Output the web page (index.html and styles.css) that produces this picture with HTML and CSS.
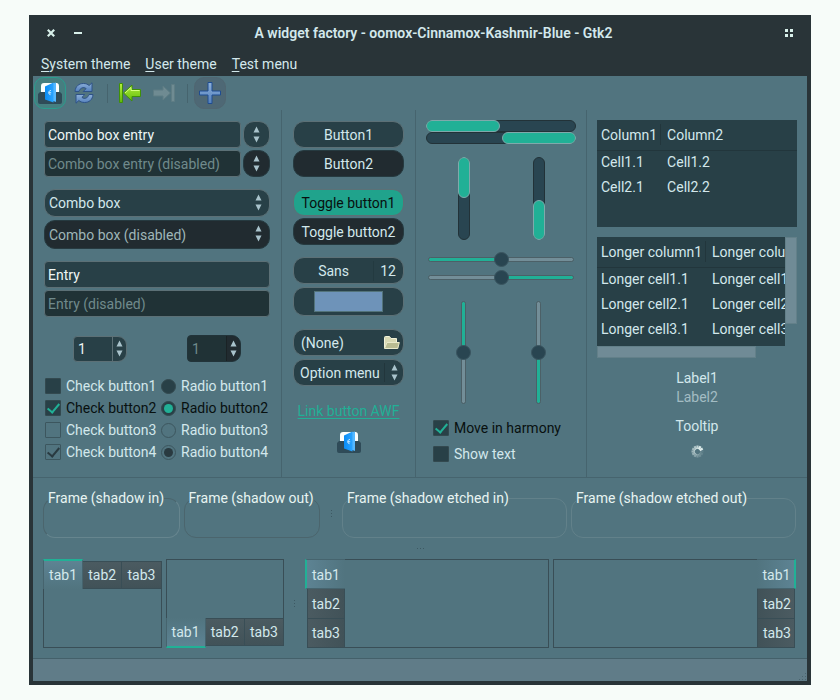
FILE: index.html
```html
<!DOCTYPE html>
<html lang="en">
<head>
<meta charset="utf-8">
<title>A widget factory</title>
<link rel="stylesheet" href="styles.css">
</head>
<body>
<svg width="0" height="0" class="defs" aria-hidden="true">
  <defs>
    <linearGradient id="blue" x1="0" y1="0" x2="0" y2="1"><stop offset="0" stop-color="#8db0d8"/><stop offset="1" stop-color="#5380bd"/></linearGradient>
    <linearGradient id="green" x1="0" y1="0" x2="0" y2="1"><stop offset="0" stop-color="#b4f03c"/><stop offset="1" stop-color="#5fb80a"/></linearGradient>
    <linearGradient id="door" x1="0" y1="0" x2="1" y2="0"><stop offset="0" stop-color="#0a8cf5"/><stop offset="1" stop-color="#2aa4ff"/></linearGradient>
    <symbol id="updown" viewBox="0 0 7 17">
      <path d="M3.500 0.500 6.500 6.500H.5Z" fill="#a9c3cc"/><path d="M3.500 16.500 6.500 10.500H.5Z" fill="#a9c3cc"/>
    </symbol>
    <symbol id="app" viewBox="0 0 24 22">
      <path d="M3 12V4a3 3 0 0 1 3-3h13a3 3 0 0 1 2 3v8Z" fill="#fbfdfc"/>
      <path d="M2 10h20l2 2v8a2 2 0 0 1-2 2H2a2 2 0 0 1-2-2v-8Z" fill="#2f4b58"/>
      <path d="M14 1.500 18 .5V20l-4-1.500Z" fill="#55b8ff"/>
      <path d="M7 4.500 15.500.5v20L7 17.500Z" fill="url(#door)"/>
      <path d="M12.800 8.500c-2.300-.3-2.800 4.200-.3 4.200M10.800 10.800h2.400" fill="none" stroke="#dff2ff"/>
    </symbol>
  </defs>
</svg>
<div class="window">
  <header class="titlebar">
    <div class="win-buttons">
      <button aria-label="Close"><svg width="8" height="8" viewBox="0 0 8 8"><path d="M.8.8l6.400 6.400M7.200.8.8 7.200" stroke="#d8f0ea" stroke-width="2.200"/></svg></button>
      <button aria-label="Minimize"><svg width="8" height="8" viewBox="0 0 8 8"><path d="M0 4h8" stroke="#d8f0ea" stroke-width="2"/></svg></button>
    </div>
    <h1>A widget factory - oomox-Cinnamox-Kashmir-Blue - Gtk2</h1>
    <div class="win-buttons">
      <button aria-label="Menu"><svg width="8" height="8" viewBox="0 0 8 8"><path d="M0 0h3v3H0zM5 0h3v3H5zM0 5h3v3H0zM5 5h3v3H5z" fill="#d8f0ea"/></svg></button>
    </div>
  </header>
  <nav class="menubar">
    <button><u>S</u>ystem theme</button>
    <button><u>U</u>ser theme</button>
    <button><u>T</u>est menu</button>
  </nav>
  <div class="surface">
    <div class="toolbar">
      <button class="tool active" aria-label="Application"><svg width="24" height="22"><use href="#app"/></svg></button>
      <button class="tool" aria-label="Refresh"><svg width="22" height="22" viewBox="0 0 22 22">
        <path d="M2 9.500C2.500 4 6 1.500 10.500 1.500c2.500 0 4.300.8 5.600 2L19 .8V9.500H10.200l2.900-2.900C10.500 4.500 7 6 6 9.500Z" fill="url(#blue)" stroke="#2e5287" stroke-linejoin="round"/>
        <path d="M20 12.500C19.500 18 16 20.500 11.500 20.500c-2.500 0-4.300-.8-5.600-2L3 21.200V12.500h8.800l-2.900 2.900c2.600 2.100 6.100.6 7.100-2.900Z" fill="url(#blue)" stroke="#2e5287" stroke-linejoin="round"/>
      </svg></button>
      <span class="sep"></span>
      <button class="tool" aria-label="Previous"><svg width="24" height="22" viewBox="0 0 24 22">
        <path d="M1.500 1.500h3v19h-3zM5.500 11 14 3v4.500h8.500v7H14V19Z" fill="url(#green)" stroke="#3f9008" stroke-linejoin="round"/>
        <path d="M7 11l6-5.500v3h8.500" fill="none" stroke="#d5ff80"/>
      </svg></button>
      <button class="tool" disabled aria-label="Next"><svg width="24" height="22" viewBox="0 0 24 22">
        <path d="M22.500 2.500h-3v17h3zM18.500 11 11 4v4H1.500v6H11v4Z" fill="#6f8b92" stroke="#5f7d84" stroke-linejoin="round"/>
      </svg></button>
      <span class="sep"></span>
      <button class="tool raised" aria-label="Add"><svg width="24" height="24" viewBox="0 0 24 24">
        <path d="M10 1.500h4V10h8.500v4H14v8.500h-4V14H1.500v-4H10Z" fill="url(#blue)" stroke="#1f4c91" stroke-linejoin="round"/>
      </svg></button>
    </div>

    <main class="columns">
      <section class="col inputs">
        <div class="group">
          <div class="combo-entry"><input class="entry" type="text" value="Combo box entry" aria-label="Combo box entry"><button class="btn" aria-label="Open list"><svg width="7" height="17"><use href="#updown"/></svg></button></div>
          <div class="combo-entry off"><input class="entry" type="text" value="Combo box entry (disabled)" aria-label="Disabled combo box entry" disabled><button class="btn" disabled aria-label="Open list"><svg width="7" height="17"><use href="#updown"/></svg></button></div>
        </div>
        <div class="group combos">
          <div class="pick"><select aria-label="Combo box"><option>Combo box</option></select><svg width="7" height="17"><use href="#updown"/></svg></div>
          <div class="pick off"><select aria-label="Combo box (disabled)" disabled><option>Combo box (disabled)</option></select><svg width="7" height="17"><use href="#updown"/></svg></div>
        </div>
        <div class="group">
          <input class="entry" type="text" value="Entry" aria-label="Entry">
          <input class="entry" type="text" value="Entry (disabled)" aria-label="Disabled entry" disabled>
        </div>
        <div class="spins">
          <div class="spin"><input type="number" value="1" aria-label="Number"><button aria-label="Step"><svg width="7" height="17"><use href="#updown"/></svg></button></div>
          <div class="spin off"><input type="number" value="1" aria-label="Disabled number" disabled><button disabled aria-label="Step"><svg width="7" height="17"><use href="#updown"/></svg></button></div>
        </div>
        <div class="toggles">
          <label><input type="checkbox">Check button1</label>
          <label><input type="radio" name="r1">Radio button1</label>
          <label class="hot"><input type="checkbox" checked>Check button2</label>
          <label class="hot"><input type="radio" name="r1" checked>Radio button2</label>
          <label><input type="checkbox" disabled>Check button3</label>
          <label><input type="radio" name="r2" disabled>Radio button3</label>
          <label><input type="checkbox" checked disabled>Check button4</label>
          <label><input type="radio" name="r2" checked disabled>Radio button4</label>
        </div>
      </section>

      <section class="col buttons">
        <div class="group">
          <button class="btn">Button1</button>
          <button class="btn" disabled>Button2</button>
        </div>
        <div class="group">
          <button class="btn pressed" aria-pressed="true">Toggle button1</button>
          <button class="btn" disabled>Toggle button2</button>
        </div>
        <div class="group wide">
          <button class="btn split"><span>Sans</span><span>12</span></button>
          <input class="btn color" type="color" value="#6e93b9" aria-label="Color">
        </div>
        <div class="group wide">
          <button class="btn file"><span>(None)</span><svg width="17" height="15" viewBox="0 0 17 15">
            <path d="M1.500 13V2.500a1 1 0 0 1 1-1h4l1.500 2h5.500V8" fill="#d8d9b4" stroke="#f1f2d8"/>
            <path d="M1.500 13.500 4 7.500h12.300l-1.500 6Z" fill="#b9bc92" stroke="#e9eacb" stroke-linejoin="round"/>
          </svg></button>
          <div class="pick menu"><select aria-label="Option menu"><option>Option menu</option></select><svg width="7" height="17"><use href="#updown"/></svg></div>
        </div>
        <a class="link" href="#awf">Link button AWF</a>
        <svg class="app-icon" width="24" height="22"><use href="#app"/></svg>
      </section>

      <section class="col ranges">
        <div class="bars">
          <div class="bar" role="progressbar" aria-label="Progress" aria-valuenow="50"><i></i></div>
          <div class="bar end" role="progressbar" aria-label="Reverse progress" aria-valuenow="50"><i></i></div>
        </div>
        <div class="pair">
          <div class="bar tall" role="progressbar" aria-label="Downward progress" aria-valuenow="50"><i></i></div>
          <div class="bar tall end" role="progressbar" aria-label="Upward progress" aria-valuenow="50"><i></i></div>
        </div>
        <div class="scales">
          <input class="scale" type="range" value="50" aria-label="Scale">
          <input class="scale rev" type="range" value="50" aria-label="Reverse scale">
        </div>
        <div class="pair">
          <input class="scale vert" type="range" value="50" aria-label="Vertical scale">
          <input class="scale vert rev" type="range" value="50" aria-label="Reverse vertical scale">
        </div>
        <div class="options">
          <label class="hot"><input type="checkbox" checked>Move in harmony</label>
          <label><input type="checkbox">Show text</label>
        </div>
      </section>

      <section class="col views">
        <div class="tree first">
          <table>
            <thead><tr><th>Column1</th><th>Column2</th></tr></thead>
            <tbody><tr><td>Cell1.1</td><td>Cell1.2</td></tr><tr><td>Cell2.1</td><td>Cell2.2</td></tr></tbody>
          </table>
        </div>
        <div class="scroller">
          <div class="tree">
            <table>
              <thead><tr><th>Longer column1</th><th>Longer column2</th></tr></thead>
              <tbody>
                <tr><td>Longer cell1.1</td><td>Longer cell1.2</td></tr>
                <tr><td>Longer cell2.1</td><td>Longer cell2.2</td></tr>
                <tr><td>Longer cell3.1</td><td>Longer cell3.2</td></tr>
              </tbody>
            </table>
          </div>
          <div class="vbar"></div>
          <div class="hbar"></div>
        </div>
        <div class="labels">
          <p>Label1</p>
          <p class="dim">Label2</p>
          <p class="tip">Tooltip</p>
          <svg width="13" height="13" viewBox="-6.500 -6.500 13 13" stroke="#dcebea" stroke-width="2.200">
            <path d="M0-2.500v-3.500" opacity=".8"/><path d="M0-2.500v-3.500" transform="rotate(30)"/><path d="M0-2.500v-3.500" transform="rotate(60)"/>
            <path d="M0-2.500v-3.500" opacity=".1" transform="rotate(90)"/><path d="M0-2.500v-3.500" opacity=".15" transform="rotate(120)"/><path d="M0-2.500v-3.500" opacity=".22" transform="rotate(150)"/>
            <path d="M0-2.500v-3.500" opacity=".3" transform="rotate(180)"/><path d="M0-2.500v-3.500" opacity=".4" transform="rotate(210)"/><path d="M0-2.500v-3.500" opacity=".5" transform="rotate(240)"/>
            <path d="M0-2.500v-3.500" opacity=".55" transform="rotate(270)"/><path d="M0-2.500v-3.500" opacity=".6" transform="rotate(300)"/><path d="M0-2.500v-3.500" opacity=".7" transform="rotate(330)"/>
          </svg>
        </div>
      </section>
    </main>

    <div class="frames">
      <div class="pane">
        <fieldset class="in"><legend>Frame (shadow in)</legend></fieldset>
        <fieldset><legend>Frame (shadow out)</legend></fieldset>
      </div>
      <span class="grip"></span>
      <div class="pane">
        <fieldset class="etched"><legend>Frame (shadow etched in)</legend></fieldset>
        <fieldset class="etched"><legend>Frame (shadow etched out)</legend></fieldset>
      </div>
    </div>
    <div class="grip flat"></div>
    <div class="notebooks">
      <div class="pane">
        <div class="book top"><div class="tabs" role="tablist"><button role="tab" aria-selected="true">tab1</button><button role="tab">tab2</button><button role="tab">tab3</button></div><div class="page"></div></div>
        <div class="book bottom"><div class="tabs" role="tablist"><button role="tab" aria-selected="true">tab1</button><button role="tab">tab2</button><button role="tab">tab3</button></div><div class="page"></div></div>
      </div>
      <span class="grip"></span>
      <div class="pane">
        <div class="book left"><div class="tabs" role="tablist"><button role="tab" aria-selected="true">tab1</button><button role="tab">tab2</button><button role="tab">tab3</button></div><div class="page"></div></div>
        <div class="book right"><div class="tabs" role="tablist"><button role="tab" aria-selected="true">tab1</button><button role="tab">tab2</button><button role="tab">tab3</button></div><div class="page"></div></div>
      </div>
    </div>
    <footer class="statusbar"><svg width="8" height="8" viewBox="0 0 8 8"><path d="M6 0h1v1H6zM3 3h1v1H3zM6 3h1v1H6zM0 6h1v1H0zM3 6h1v1H3zM6 6h1v1H6z" fill="#4a646f"/></svg></footer>
  </div>
</div>
</body>
</html>
```
FILE: styles.css
```css
:root {
  --bg: #51747f;
  --dark: #293438;
  --field: #284047;
  --field-off: #203236;
  --btn-off: #212b30;
  --trough: #294551;
  --accent: #21b096;
  --text: #d3e8ec;
  --line: #46646e;
  --edge: #5c7076;
}
* { box-sizing: border-box; }
body {
  margin: 0;
  padding: 15px 29px;
  background: #f7fcf9;
  color: var(--text);
  font: 14px/20px Roboto, "Noto Sans", sans-serif;
}
button, input, select { font: inherit; color: inherit; margin: 0; }
button { padding: 0; border: 0; background: none; }
svg { display: block; flex: none; }
.defs { position: absolute; }

.window { background: var(--dark); padding: 0 4px 4px; }
.titlebar { display: flex; align-items: center; height: 36px; padding: 0 14px; }
.titlebar h1 { flex: 1; margin: 0; font-size: 14px; line-height: 20px; font-weight: 600; text-align: center; }
.win-buttons { display: flex; gap: 19px; }
.menubar { display: flex; gap: 15px; height: 25px; padding: 0 8px; align-items: center; }
.menubar u { text-underline-offset: 2px; }
.surface { background: var(--bg); }

.toolbar { display: flex; align-items: center; height: 34px; padding: 0 1px; gap: 2px; }
.tool { display: grid; place-items: center; width: 32px; height: 32px; border-radius: 10px; border: 1px solid transparent; }
.tool.active { background: #467e80; border-color: #2a9d8d; }
.tool.raised { background: #4e6875; border-color: #506671; }
.sep { width: 1px; height: 19px; margin: 0 4px 0 5px; background: #66848c; border-left: 1px solid var(--line); }

.columns { display: grid; grid-template-columns: 248fr 134fr 171fr 221fr; border-bottom: 1px solid var(--line); }
.col { display: flex; flex-direction: column; min-width: 0; padding: 11px 11px 13px; }
.col + .col { border-left: 1px solid var(--line); }
.group { display: flex; flex-direction: column; gap: 2px; margin-bottom: 12px; }

.entry { width: 100%; min-width: 0; height: 27px; padding: 0 3px; border: 1px solid var(--edge); border-radius: 4px; background: var(--field); color: #eef6f4; }
.entry:disabled { background: var(--field-off); color: #708a8c; }
.combo-entry { display: flex; gap: 2px; }
.combo-entry .btn { flex: none; width: 27px; display: grid; place-items: center; }
.btn, .pick select { height: 27px; border: 1px solid var(--edge); border-radius: 11px; background: var(--field); }
.btn:disabled, .pick select:disabled { background: var(--btn-off); border-color: #263a40; opacity: 1; }
.pick { position: relative; }
.pick select { display: block; appearance: none; width: 100%; padding: 0 4px; }
.pick svg { position: absolute; right: 8px; top: 5px; }
.pick select:disabled { color: #9fb6b8; }
.combos { gap: 3px; }
.combos select { height: 28px; }
.combos select:disabled { height: 29px; }

.spins { display: flex; justify-content: space-between; padding: 0 29px; margin: 6px 0 13px; align-items: center; }
.spin { display: flex; width: 54px; height: 26px; border: 1px solid var(--edge); border-radius: 4px 9px 9px 4px; background: var(--field); overflow: hidden; }
.spin input { flex: 1; min-width: 0; width: 0; padding: 0 4px; border: 0; background: none; appearance: textfield; color: #eef6f4; }
.spin button { display: grid; place-items: center; width: 14px; border-left: 1px solid var(--edge); }
.spin.off { height: 27px; background: var(--field-off); border-color: #22343a; }
.spin.off input { color: #708a8c; }
.spin.off button { background: var(--btn-off); border-color: #1a2225; }

.toggles { display: grid; grid-template-columns: 116px auto; justify-content: start; padding-left: 1px; }
label { display: flex; align-items: center; gap: 5px; height: 22px; white-space: nowrap; }
.hot { color: #08100f; }
input[type="checkbox"], input[type="radio"] { appearance: none; flex: none; display: grid; place-items: center; width: 16px; height: 16px; border: 1px solid #33494f; background: var(--field); border-radius: 1px; }
input[type="radio"] { width: 15px; height: 15px; border-radius: 50%; }
input[type="checkbox"]:checked::before { content: ""; width: 5px; height: 10px; border: solid var(--accent); border-width: 0 2px 2px 0; transform: translateY(-1px) rotate(40deg); }
input[type="radio"]:checked::before { content: ""; width: 9px; height: 9px; border-radius: 50%; background: var(--accent); }
input[type="checkbox"]:disabled, input[type="radio"]:disabled { background: none; border-color: #3c565e; }
input[type="checkbox"]:disabled:checked::before { border-color: #293a40; }
input[type="radio"]:disabled:checked::before { background: #293a40; }

.btn { width: 100%; text-align: center; }
.pressed { background: #20a38c; color: #08100f; }
.wide { gap: 3px; margin-bottom: 13px; }
.split { display: flex; align-items: center; }
.split span:first-child { flex: 1; border-right: 1px solid #233a40; }
.split span:last-child { padding: 0 7px 0 6px; }
.color { display: block; height: 29px; padding: 3px 20px; }
.color::-webkit-color-swatch-wrapper { padding: 0; }
.color::-webkit-color-swatch { border: 1px solid #53737a; border-radius: 0; }
.file { display: flex; align-items: center; justify-content: space-between; padding: 0 3px 0 7px; }
.menu select { padding: 0 6px; background: linear-gradient(#22363c, #22363c) right 18px center / 1px 19px no-repeat var(--field); }
.pick.menu svg { right: 6px; }
.link { align-self: center; color: var(--accent); text-underline-offset: 2px; margin: 2px 0 10px; }
.app-icon { align-self: center; }

.ranges { padding: 10px 10px 12px; }
.bar { display: flex; height: 12px; border: 1px solid #223238; border-radius: 6px; background: var(--trough); }
.bar i { width: 50%; margin: -1px; border: 1px solid #7fa9ab; border-radius: 6px; background: var(--accent); }
.bar.end { justify-content: flex-end; }
.pair { display: flex; justify-content: space-around; margin-top: 13px; }
.bar.tall { flex-direction: column; width: 12px; height: 83px; }
.bar.tall i { width: 12px; height: 50%; }
.scales { display: flex; flex-direction: column; gap: 13px; padding: 0 2px; margin: 17px 0 9px; }
.scale { appearance: none; display: block; width: 100%; height: 5px; border: 1px solid #4c6067; border-radius: 3px; background: linear-gradient(to right, var(--accent) 50%, #738e98 50%); }
.scale.rev { background: linear-gradient(to left, var(--accent) 50%, #738e98 50%); }
.scale::-webkit-slider-thumb { appearance: none; width: 15px; height: 15px; border: 1px solid #3a5560; border-radius: 50%; background: var(--trough); }
.scale.vert { writing-mode: vertical-lr; width: 5px; height: 103px; background: linear-gradient(to bottom, var(--accent) 50%, #738e98 50%); }
.scale.vert.rev { background: linear-gradient(to top, var(--accent) 50%, #738e98 50%); }
.scales + .pair { margin-top: 12px; }
.options { display: grid; gap: 4px; margin-top: 13px; padding-left: 7px; }

.views { padding: 10px 10px 12px; }
.tree { background: var(--field); overflow: hidden; }
.tree.first { height: 107px; }
table { border-collapse: collapse; min-width: 100%; }
th, td { height: 25px; padding: 0 4px; font-weight: 400; text-align: left; white-space: nowrap; }
td { padding-bottom: 2px; }
th { height: 30px; border-bottom: 1px solid #22363c; }
th + th, td + td { width: 100%; padding-left: 6px; }
th:first-child { background: linear-gradient(#22363c, #22363c) right center / 1px 21px no-repeat; }
.scroller { display: grid; grid-template-columns: minmax(0, 1fr) 12px; margin-top: 10px; }
.scroller .tree { height: 109px; }
.vbar, .hbar { background: #708b96; border: 1px solid #638089; }
.vbar { height: 87px; }
.hbar { width: 159px; height: 12px; }
.labels { display: flex; flex-direction: column; align-items: center; margin-top: 11px; }
.labels p { margin: 0; line-height: 19px; }
.labels .dim { color: #a3bcc3; }
.labels .tip { margin: 10px 0 9px; }

.frames, .notebooks { display: grid; padding: 0 11px 0 10px; }
.frames { grid-template-columns: 277fr 22px 454fr; padding-top: 10px; }
.notebooks { grid-template-columns: 241fr 21px 491fr; padding-bottom: 10px; }
.pane { display: grid; grid-template-columns: 1fr 1fr; gap: 4px; min-width: 0; }
fieldset { min-width: 0; height: 50px; margin: 0; padding: 0 4px; border: 1px solid #4b656d; border-radius: 12px; }
fieldset.in { border-bottom-color: #66858e; border-right-color: #66858e; }
fieldset.etched { border-color: #62818a; }
legend { padding: 0; color: #e8f4f2; white-space: nowrap; }
.grip { place-self: center; width: 1px; height: 7px; background: repeating-linear-gradient(#3d5963 0 1px, transparent 1px 3px); }
.grip.flat { width: 7px; height: 1px; margin: 10px auto; background: repeating-linear-gradient(to right, #3d5963 0 1px, transparent 1px 3px); }

.book { display: flex; height: 89px; min-width: 0; }
.top { flex-direction: column; }
.bottom { flex-direction: column-reverse; }
.right { flex-direction: row-reverse; }
.page { flex: 1; border: 1px solid #394e56; }
.tabs { display: flex; }
.left .tabs, .right .tabs { flex-direction: column; }
.tabs button { flex: 1; border: 1px solid #394e56; background: linear-gradient(#4b5b61, #415258); }
.top .tabs { height: 30px; align-items: flex-end; }
.bottom .tabs { height: 30px; align-items: flex-start; }
.top button, .bottom button { height: 28px; }
.top button + button, .bottom button + button { margin-left: -1px; }
.left .tabs button, .right .tabs button { width: 38px; padding-top: 1px; background: linear-gradient(to right, #4b5b61, #415258); }
.right .tabs button { padding-left: 2px; background: linear-gradient(to left, #4b5b61, #415258); }
.left .tabs { width: 40px; align-items: flex-end; margin-right: -1px; }
.right .tabs { width: 39px; align-items: flex-start; margin-left: -1px; }
.left button + button, .right button + button { margin-top: -1px; }
.top .page { border-top: 0; }
.bottom .page { border-bottom: 0; }
.tabs [aria-selected="true"] { position: relative; border-color: #46646e; }
.top .tabs [aria-selected="true"] { height: 30px; border-top: 2px solid var(--accent); border-bottom: 0; background: linear-gradient(#5d8393, var(--bg)); }
.bottom .tabs [aria-selected="true"] { height: 30px; border-bottom: 2px solid var(--accent); border-top: 0; background: linear-gradient(to top, #5d8393, var(--bg)); }
.left .tabs [aria-selected="true"] { width: 40px; border-left: 2px solid var(--accent); border-right: 0; background: linear-gradient(to right, #5d8393, var(--bg)); }
.right .tabs [aria-selected="true"] { width: 39px; border-right: 2px solid var(--accent); border-left: 0; background: linear-gradient(to left, #5d8393, var(--bg)); }

.statusbar { display: flex; justify-content: flex-end; align-items: flex-end; height: 23px; background: #607c88; border-top: 1px solid #44606a; }
```
